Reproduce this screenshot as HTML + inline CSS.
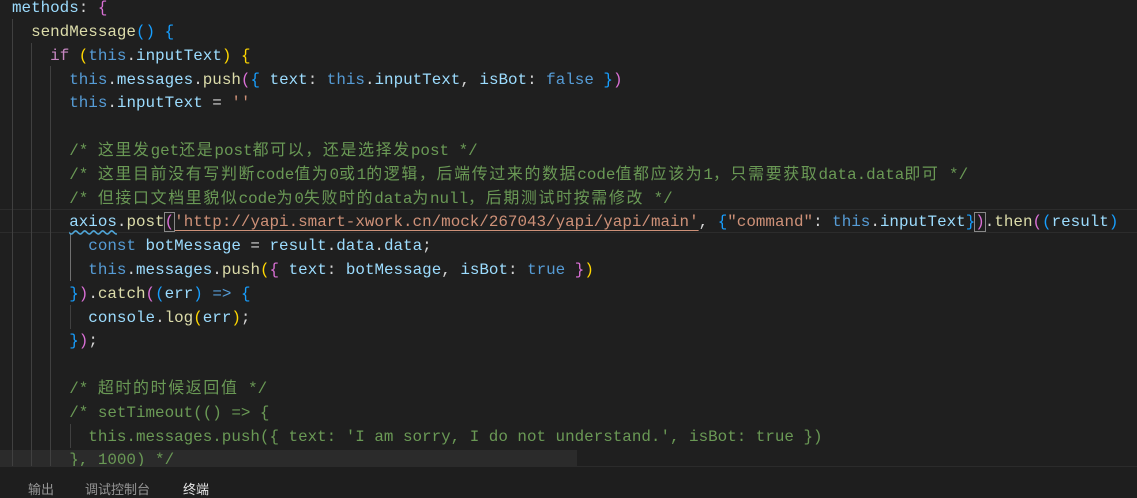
<!DOCTYPE html>
<html><head><meta charset="utf-8"><style>
html,body{margin:0;padding:0;width:1137px;height:489px;overflow:hidden;background:#1f1f1f;}
#ed{position:absolute;left:0;top:0;width:1137px;height:466px;overflow:hidden;background:#1f1f1f;}
.l{position:absolute;left:12px;height:23.8px;line-height:23.8px;white-space:pre;font-family:"Liberation Mono","Noto Sans CJK SC",monospace;font-size:15.9px;color:#d4d4d4;}
.z{letter-spacing:1.7px}
.g{position:absolute;width:1px;background:#404040;}
.k{color:#569cd6}.c{color:#c586c0}.f{color:#dcdcaa}.v{color:#9cdcfe}.s{color:#ce9178}.cm{color:#6a9955}
.y{color:#ffd700}.p{color:#da70d6}.b{color:#179fff}
#panel{position:absolute;left:0;top:466px;width:1137px;height:23px;background:#1e1e1e;border-top:1px solid #2b2b2b;}
.t{position:absolute;top:12px;font-family:"Liberation Sans","Noto Sans CJK SC",sans-serif;font-size:13px;color:#969696;}
</style></head><body>
<div id="ed">
<div style="position:absolute;left:0;top:209px;width:1137px;height:22px;border-top:1px solid #2c2c2c;border-bottom:1px solid #2c2c2c;"></div>
<div style="position:absolute;left:0;top:450px;width:577px;height:16px;background:#2b2b2b;"></div>
<div class="g" style="left:12px;top:19px;height:447px"></div>
<div class="g" style="left:31px;top:43px;height:423px"></div>
<div class="g" style="left:50px;top:66px;height:400px"></div>
<div class="g" style="left:70px;top:233px;height:48px;background:#707070"></div>
<div class="g" style="left:70px;top:305px;height:24px"></div>
<div class="g" style="left:70px;top:424px;height:24px"></div>

<div class="l" style="top:-2.9px"><span class="v">methods</span>: <span class="p">{</span></div>
<div class="l" style="top:20.9px">  <span class="f">sendMessage</span><span class="b">()</span> <span class="b">{</span></div>
<div class="l" style="top:44.7px">    <span class="c">if</span> <span class="y">(</span><span class="k">this</span>.<span class="v">inputText</span><span class="y">)</span> <span class="y">{</span></div>
<div class="l" style="top:68.5px">      <span class="k">this</span>.<span class="v">messages</span>.<span class="f">push</span><span class="p">(</span><span class="b">{</span> <span class="v">text</span>: <span class="k">this</span>.<span class="v">inputText</span>, <span class="v">isBot</span>: <span class="k">false</span> <span class="b">}</span><span class="p">)</span></div>
<div class="l" style="top:92.3px">      <span class="k">this</span>.<span class="v">inputText</span> = <span class="s">''</span></div>
<div class="l cm" style="top:139.9px">      /* <span class="z">这里发</span>get<span class="z">还是</span>post<span class="z">都可以，还是选择发</span>post */</div>
<div class="l cm" style="top:163.7px">      /* <span class="z">这里目前没有写判断</span>code<span class="z">值为</span>0<span class="z">或</span>1<span class="z">的逻辑，后端传过来的数据</span>code<span class="z">值都应该为</span>1<span class="z">，只需要获取</span>data.data<span class="z">即可</span> */</div>
<div class="l cm" style="top:187.5px">      /* <span class="z">但接口文档里貌似</span>code<span class="z">为</span>0<span class="z">失败时的</span>data<span class="z">为</span>null<span class="z">，后期测试时按需修改</span> */</div>
<div class="l" style="top:211.3px">      <span class="v" style="text-decoration:underline wavy #4fa6d8;text-underline-offset:3px">axios</span>.<span class="f">post</span><span class="p" style="outline:1px solid #888">(</span><span class="s" style="text-decoration:underline;text-underline-offset:4px">'http://yapi.smart-xwork.cn/mock/267043/yapi/yapi/main'</span>, <span class="b">{</span><span class="s">"command"</span>: <span class="k">this</span>.<span class="v">inputText</span><span class="b">}</span><span class="p" style="outline:1px solid #888">)</span>.<span class="f">then</span><span class="p">(</span><span class="b">(</span><span class="v">result</span><span class="b">)</span></div>
<div class="l" style="top:235.1px">        <span class="k">const</span> <span class="v">botMessage</span> = <span class="v">result</span>.<span class="v">data</span>.<span class="v">data</span>;</div>
<div class="l" style="top:258.9px">        <span class="k">this</span>.<span class="v">messages</span>.<span class="f">push</span><span class="y">(</span><span class="p">{</span> <span class="v">text</span>: <span class="v">botMessage</span>, <span class="v">isBot</span>: <span class="k">true</span> <span class="p">}</span><span class="y">)</span></div>
<div class="l" style="top:282.7px">      <span class="b">}</span><span class="p">)</span>.<span class="f">catch</span><span class="p">(</span><span class="b">(</span><span class="v">err</span><span class="b">)</span> <span class="k">=&gt;</span> <span class="b">{</span></div>
<div class="l" style="top:306.5px">        <span class="v">console</span>.<span class="f">log</span><span class="y">(</span><span class="v">err</span><span class="y">)</span>;</div>
<div class="l" style="top:330.3px">      <span class="b">}</span><span class="p">)</span>;</div>
<div class="l cm" style="top:377.9px">      /* <span class="z">超时的时候返回值</span> */</div>
<div class="l cm" style="top:401.7px">      /* setTimeout(() =&gt; {</div>
<div class="l cm" style="top:425.5px">        this.messages.push({ text: 'I am sorry, I do not understand.', isBot: true })</div>
<div class="l cm" style="top:449.3px">      }, 1000) */</div>
</div>
<div id="panel">
<span class="t" style="left:28px">输出</span>
<span class="t" style="left:85px">调试控制台</span>
<span class="t" style="left:183px;color:#e7e7e7">终端</span>
</div>
</body></html>
